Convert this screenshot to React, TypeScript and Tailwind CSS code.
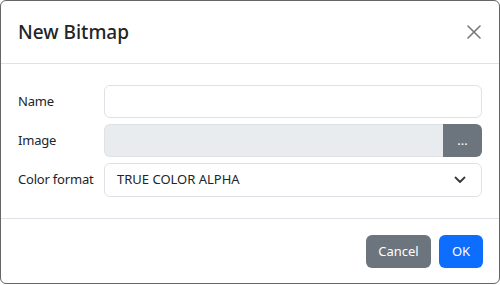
import React from "react";

const font = { fontFamily: '"Noto Sans", "Open Sans", sans-serif' };

function Row({ label, children }: { label: string; children: React.ReactNode }) {
    return (
        <div className="flex items-center">
            <label className="w-[86px] shrink-0 text-[13px] tracking-[-0.2px] text-[#212529]">{label}</label>
            <div className="flex-1">{children}</div>
        </div>
    );
}

export default function App() {
    return (
        <div className="w-[500px] h-[285px] bg-white" style={font}>
            <div className="flex h-[284px] w-[500px] flex-col rounded-md border border-[#666] bg-white">
                {/* Header */}
                <div className="flex h-[63px] shrink-0 items-center justify-between border-b border-[#dee2e6] pl-[17px] pr-[15px]">
                    <h5 className="text-[19px] font-medium text-[#212529]">New Bitmap</h5>
                    <button className="flex h-[20px] w-[20px] items-center justify-center">
                        <svg width="14" height="14" viewBox="0 0 14 14" stroke="#7a7a7a" strokeWidth="1.6" strokeLinecap="round">
                            <line x1="1" y1="1" x2="13" y2="13" />
                            <line x1="13" y1="1" x2="1" y2="13" />
                        </svg>
                    </button>
                </div>

                {/* Body */}
                <div className="flex flex-col gap-[6px] border-b border-[#dee2e6] pl-[17px] pr-[17px] pt-[21px] pb-[21px]">
                    <Row label="Name">
                        <input className="block h-[33px] w-full rounded-md border border-[#dee2e6] bg-white px-3 text-[13px] outline-none" />
                    </Row>
                    <Row label="Image">
                        <div className="flex h-[33px] w-full">
                            <input
                                disabled
                                className="block h-full flex-1 rounded-l-md border border-r-0 border-[#dee2e6] bg-[#e9ecef] px-3 text-[13px] outline-none"
                            />
                            <button className="flex h-full w-[39px] items-center justify-center rounded-r-md bg-[#6c757d] text-[13px] text-white">
                                ...
                            </button>
                        </div>
                    </Row>
                    <Row label="Color format">
                        <div className="flex h-[34px] w-full items-center justify-between rounded-md border border-[#dee2e6] bg-white pl-[12px] pr-[15px] text-[13px] text-[#212529]">
                            <span>TRUE COLOR ALPHA</span>
                            <svg width="12" height="8" viewBox="0 0 12 8" fill="none" stroke="#343a40" strokeWidth="1.8" strokeLinecap="round" strokeLinejoin="round">
                                <polyline points="1.5,1.5 6,6 10.5,1.5" />
                            </svg>
                        </div>
                    </Row>
                </div>

                {/* Footer */}
                <div className="flex justify-end gap-[8px] pt-[16px] pr-[16px]">
                    <button className="h-[33px] w-[65px] rounded-md bg-[#6c757d] text-[13px] text-white">Cancel</button>
                    <button className="h-[33px] w-[44px] rounded-md bg-[#0d6efd] text-[13px] text-white">OK</button>
                </div>
            </div>
        </div>
    );
}
